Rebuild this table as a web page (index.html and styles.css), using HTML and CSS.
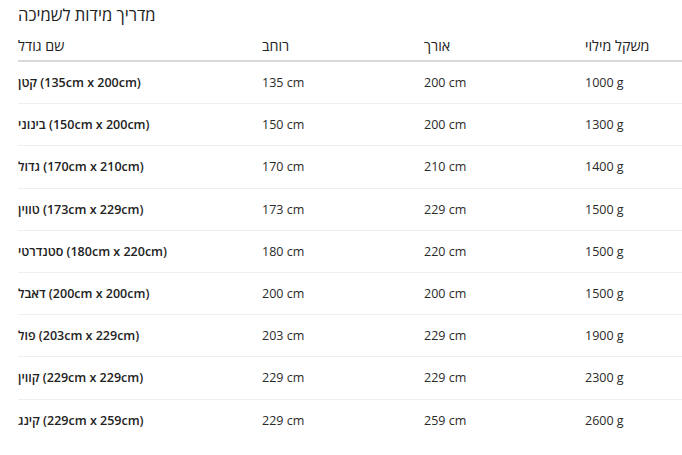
FILE: index.html
```html
<!DOCTYPE html>
<html lang="he">
<head>
<meta charset="utf-8">
<link rel="stylesheet" href="styles.css">
</head>
<body>
<div class="guide">
  <h2 class="title">מדריך מידות לשמיכה</h2>
  <table class="sizes">
    <thead>
      <tr><th class="c1">שם גודל</th><th class="c2">רוחב</th><th class="c3">אורך</th><th class="c4">משקל מילוי</th></tr>
    </thead>
    <tbody>
      <tr><td class="name">קטן (135cm x 200cm)</td><td>135 cm</td><td>200 cm</td><td>1000 g</td></tr>
      <tr><td class="name">בינוני (150cm x 200cm)</td><td>150 cm</td><td>200 cm</td><td>1300 g</td></tr>
      <tr><td class="name">גדול (170cm x 210cm)</td><td>170 cm</td><td>210 cm</td><td>1400 g</td></tr>
      <tr><td class="name">טווין (173cm x 229cm)</td><td>173 cm</td><td>229 cm</td><td>1500 g</td></tr>
      <tr><td class="name">סטנדרטי (180cm x 220cm)</td><td>180 cm</td><td>220 cm</td><td>1500 g</td></tr>
      <tr><td class="name">דאבל (200cm x 200cm)</td><td>200 cm</td><td>200 cm</td><td>1500 g</td></tr>
      <tr><td class="name">פול (203cm x 229cm)</td><td>203 cm</td><td>229 cm</td><td>1900 g</td></tr>
      <tr><td class="name">קווין (229cm x 229cm)</td><td>229 cm</td><td>229 cm</td><td>2300 g</td></tr>
      <tr class="last"><td class="name">קינג (229cm x 259cm)</td><td>229 cm</td><td>259 cm</td><td>2600 g</td></tr>
    </tbody>
  </table>
</div>
</body>
</html>
```
FILE: styles.css
```css
html, body {
  margin: 0;
  padding: 0;
  background: #ffffff;
}
body {
  font-family: "Open Sans", "DejaVu Sans", sans-serif;
  color: #222222;
}
.guide {
  padding: 3px 0 0 18px;
}
.title {
  margin: 0;
  font-size: 16.6px;
  font-weight: 400;
  line-height: 24px;
  color: #222222;
}
.sizes {
  border-collapse: collapse;
  width: 664px;
  table-layout: fixed;
  margin-top: 5px;
}
.sizes th {
  text-align: left;
  font-weight: 400;
  font-size: 14.3px;
  padding: 0 0 1px 0;
  height: 27px;
  vertical-align: middle;
  border-bottom: 2px solid #d9d9d9;
}
.c1 { width: 244px; }
.c2 { width: 162px; }
.c3 { width: 161px; }
.sizes td {
  font-size: 12.5px;
  padding: 0;
  height: 41.2px;
  vertical-align: middle;
  border-bottom: 1px solid #efefef;
  color: #2a2a2a;
}
.sizes .last td {
  border-bottom-color: transparent;
}
.sizes td.name {
  font-weight: 600;
  color: #222222;
}
```
